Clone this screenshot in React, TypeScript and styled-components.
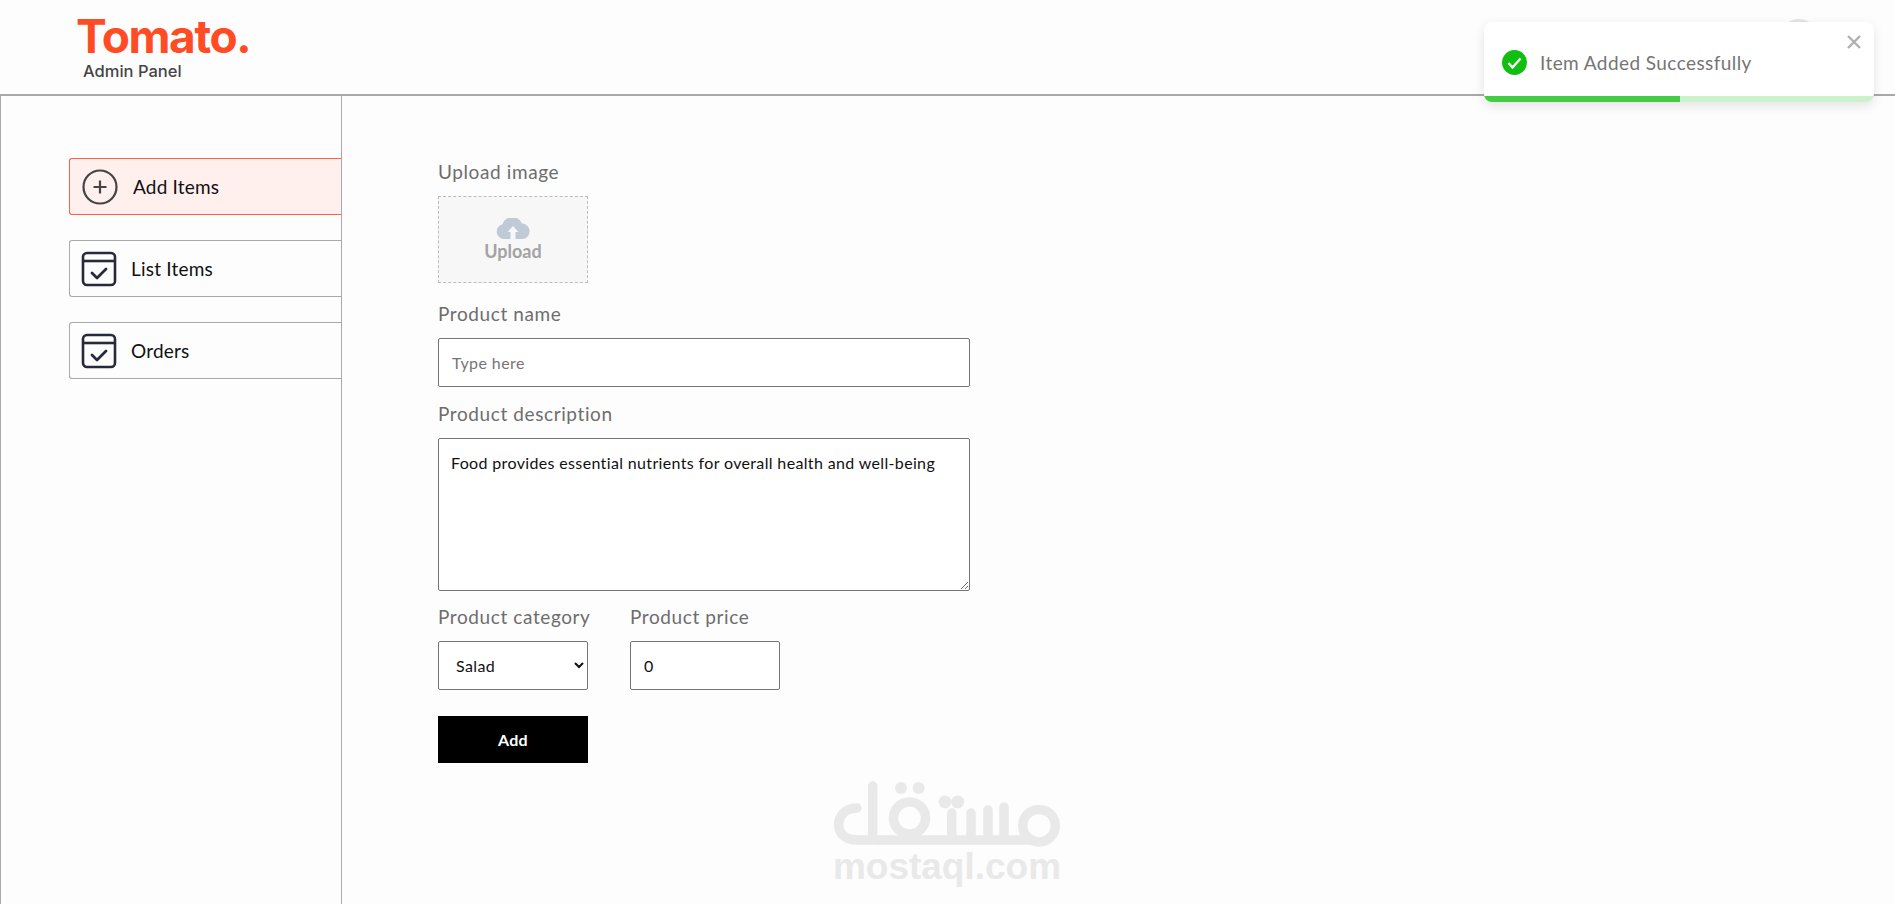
import styled, { createGlobalStyle } from "styled-components";
import { ReactNode } from "react";

const GlobalStyle = createGlobalStyle`
    * {
        box-sizing: border-box;
    }

    html, body {
        margin: 0;
        height: 100%;
        overflow: hidden;
        background: #fdfdfd;
        font-family: "Lato", "Noto Sans", sans-serif;
    }
`;

const Page = styled.div`
    height: 100vh;
    position: relative;
    overflow: hidden;
    display: flex;
    flex-direction: column;
`;

const Navbar = styled.header`
    height: 96px;
    flex-shrink: 0;
    padding-left: 76px;
    padding-top: 13px;
    border-bottom: 2px solid #a9a9a9;
`;

const Logo = styled.div`
    color: #ff4c24;
    font-family: "Inter", sans-serif;
    font-weight: 700;
    font-size: 46px;
    line-height: 46px;
    letter-spacing: -1.4px;
`;

const LogoSub = styled.div`
    color: #454545;
    font-family: "Inter", sans-serif;
    font-size: 16.5px;
    font-weight: 500;
    line-height: 20px;
    margin-left: 7px;
    margin-top: 2px;
`;

const Avatar = styled.div`
    position: absolute;
    top: 19px;
    right: 76px;
    width: 40px;
    height: 40px;
    border-radius: 50%;
    background: #e4e4e4;
`;

const Content = styled.div`
    flex: 1;
    display: flex;
    min-height: 0;
`;

const Sidebar = styled.aside`
    width: 342px;
    flex-shrink: 0;
    border-left: 1px solid #a9a9a9;
    border-right: 1px solid #a9a9a9;
    padding: 62px 0 0 68px;
    display: flex;
    flex-direction: column;
    gap: 26px;
`;

const NavItem = styled.div<{ $active?: boolean }>`
    height: 57px;
    margin-bottom: -1px;
    display: flex;
    align-items: center;
    gap: ${(p) => (p.$active ? 15 : 14)}px;
    padding-left: ${(p) => (p.$active ? 12 : 11)}px;
    border: 1px solid ${(p) => (p.$active ? "#ff6347" : "#a9a9a9")};
    border-right: 0;
    border-radius: 3px 0 0 3px;
    background: ${(p) => (p.$active ? "#fff0ed" : "transparent")};
    color: #111;
    font-size: 19px;
    letter-spacing: 0.2px;
`;

const Form = styled.form`
    margin-left: 96px;
    padding-top: 64px;
    width: 532px;
    display: flex;
    flex-direction: column;
`;

const Field = styled.div<{ $after?: number; $width?: number }>`
    display: flex;
    flex-direction: column;
    gap: 12px;
    margin-bottom: ${(p) => p.$after ?? 0}px;
    width: ${(p) => (p.$width ? `${p.$width}px` : "auto")};
`;

const Label = styled.label`
    color: #6d6d6d;
    font-size: 19px;
    letter-spacing: 0.6px;
    line-height: 24px;
    white-space: nowrap;
`;

const UploadBox = styled.div`
    width: 150px;
    height: 87px;
    background: #f7f7f7;
    border: 1px dashed #bdbdbd;
    display: flex;
    flex-direction: column;
    align-items: center;
    justify-content: center;
    color: #a3a3a3;
    font-size: 18px;
    font-weight: 700;
    line-height: 20px;
`;

const TextInput = styled.input`
    height: 49px;
    width: 100%;
    padding: 0 13px;
    border: 1px solid #757575;
    border-radius: 2px;
    background: #fff;
    font-family: inherit;
    font-size: 16px;
    letter-spacing: 0.4px;
    color: #111;

    &::placeholder {
        color: #757575;
    }
`;

const TextArea = styled.textarea`
    display: block;
    width: 100%;
    height: 153px;
    padding: 14px 12px;
    border: 1px solid #757575;
    border-radius: 2px;
    background: #fff;
    font-family: inherit;
    font-size: 16px;
    letter-spacing: 0.35px;
    line-height: 20px;
    color: #111;
`;

const FieldRow = styled.div`
    display: flex;
    gap: 42px;
    margin-bottom: 26px;
`;

const Select = styled.select`
    height: 49px;
    width: 100%;
    padding: 0 13px;
    border: 1px solid #757575;
    border-radius: 2px;
    background: #fff;
    font-family: inherit;
    font-size: 16px;
    letter-spacing: 0.4px;
    color: #111;
`;

const SubmitButton = styled.button`
    width: 150px;
    height: 47px;
    border: 0;
    background: #000;
    color: #fff;
    font-family: inherit;
    font-size: 16px;
    letter-spacing: 0.3px;
    font-weight: 700;
`;

const Toast = styled.div`
    position: absolute;
    top: 22px;
    right: 21px;
    width: 390px;
    height: 80px;
    background: #fff;
    border-radius: 8px;
    overflow: hidden;
    box-shadow: 0 4px 12px rgba(0, 0, 0, 0.1);
    display: flex;
    align-items: center;
    gap: 13px;
    padding: 0 18px 0;
    color: #757575;
    font-size: 19px;
    letter-spacing: 0.42px;
`;

const ToastClose = styled.svg`
    position: absolute;
    top: 13px;
    right: 13px;
`;

const ToastTrack = styled.div`
    position: absolute;
    left: 0;
    right: 0;
    bottom: 0;
    height: 6px;
    background: #ccf2cc;
`;

const ToastProgress = styled.div`
    height: 100%;
    background: #44cc44;
`;

const Watermark = styled.div`
    position: absolute;
    left: 833px;
    top: 780px;
    width: 228px;
    display: flex;
    flex-direction: column;
    align-items: center;
    pointer-events: none;
`;

const WatermarkText = styled.div`
    color: #e9e9e9;
    font-family: "Liberation Sans", sans-serif;
    font-weight: 700;
    font-size: 37px;
    line-height: 37px;
    margin-top: -1px;
    white-space: nowrap;
`;

function PlusIcon() {
    return (
        <svg width="36" height="36" viewBox="0 0 36 36" fill="none" stroke="#444" strokeWidth="2.2">
            <circle cx="18" cy="18" r="16.500" />
            <path d="M18 11.500v13M11.500 18h13" />
        </svg>
    );
}

function OrderIcon() {
    return (
        <svg width="36" height="36" viewBox="0 0 36 36" fill="none" stroke="#262a3c" strokeWidth="2.600" strokeLinejoin="round">
            <rect x="2" y="2" width="32" height="32" rx="4" />
            <path d="M2 10h32" />
            <path d="M11 22l5 5 9-9" strokeLinecap="round" strokeWidth="2.800" />
        </svg>
    );
}

function CloudIcon() {
    return (
        <svg width="36" height="23" viewBox="0 0 36 23">
            <path
                d="M9 21a7.500 7.500 0 0 1-1.500-14.800A10.500 10.500 0 0 1 27 5.500a7.800 7.800 0 0 1 1 15.500z"
                fill="#c0c9d6"
            />
            <path d="M18 8l5.500 6H20.500v7h-5v-7H12.500z" fill="#f7f7f7" />
        </svg>
    );
}

function CheckBadge() {
    return (
        <svg width="25" height="25" viewBox="0 0 25 25">
            <circle cx="12.500" cy="12.500" r="12.500" fill="#10bf10" />
            <path d="M6.500 13l4 4.500 8-9" fill="none" stroke="#fff" strokeWidth="2.400" />
        </svg>
    );
}

function MostaqlMark() {
    return (
        <svg width="228" height="69" viewBox="0 0 228 69" fill="none" stroke="#e9e9e9" strokeWidth="9.500" strokeLinecap="round">
            <path d="M24 28C12 28 5.700 36 5.700 45C5.700 54 13 60 24 60H200" />
            <path d="M39.700 6V54Q39.700 60 46 60" />
            <circle cx="76.500" cy="38" r="16" />
            <circle cx="206" cy="45.700" r="16.300" />
            <path d="M118.700 33V58M138 33V58M155 30V58M171 27V58" />
            <g fill="#e9e9e9" stroke="none">
                <circle cx="68" cy="8" r="6" />
                <circle cx="85.700" cy="8" r="6" />
                <circle cx="112" cy="22" r="6.500" />
                <circle cx="124.700" cy="22" r="6.500" />
            </g>
        </svg>
    );
}

function SidebarItem({ icon, label, active }: { icon: ReactNode; label: string; active?: boolean }) {
    return (
        <NavItem $active={active}>
            {icon}
            <span>{label}</span>
        </NavItem>
    );
}

/**
 * Admin panel, add item page
 */
export default function App() {
    return (
        <Page>
            <GlobalStyle />
            <Navbar>
                <Logo>Tomato.</Logo>
                <LogoSub>Admin Panel</LogoSub>
            </Navbar>
            <Avatar />
            <Content>
                <Sidebar>
                    <SidebarItem active icon={<PlusIcon />} label="Add Items" />
                    <SidebarItem icon={<OrderIcon />} label="List Items" />
                    <SidebarItem icon={<OrderIcon />} label="Orders" />
                </Sidebar>
                <Form>
                    <Field $after={19}>
                        <Label>Upload image</Label>
                        <UploadBox>
                            <CloudIcon />
                            Upload
                        </UploadBox>
                    </Field>
                    <Field $after={15}>
                        <Label>Product name</Label>
                        <TextInput type="text" placeholder="Type here" />
                    </Field>
                    <Field $after={14}>
                        <Label>Product description</Label>
                        <TextArea defaultValue="Food provides essential nutrients for overall health and well-being" />
                    </Field>
                    <FieldRow>
                        <Field $width={150}>
                            <Label>Product category</Label>
                            <Select defaultValue="Salad">
                                <option>Salad</option>
                                <option>Rolls</option>
                                <option>Deserts</option>
                                <option>Sandwich</option>
                                <option>Cake</option>
                                <option>Pure Veg</option>
                                <option>Pasta</option>
                                <option>Noodles</option>
                            </Select>
                        </Field>
                        <Field $width={150}>
                            <Label>Product price</Label>
                            <TextInput type="number" defaultValue={0} />
                        </Field>
                    </FieldRow>
                    <SubmitButton type="button">Add</SubmitButton>
                </Form>
            </Content>
            <Toast>
                <CheckBadge />
                <span>Item Added Successfully</span>
                <ToastClose width="14" height="14" viewBox="0 0 14 14" stroke="#b0b0b0" strokeWidth="2.400">
                    <path d="M1 1l12 12M13 1L1 13" />
                </ToastClose>
                <ToastTrack>
                    <ToastProgress style={{ width: "50.3%" }} />
                </ToastTrack>
            </Toast>
            <Watermark>
                <MostaqlMark />
                <WatermarkText>mostaql.com</WatermarkText>
            </Watermark>
        </Page>
    );
}
